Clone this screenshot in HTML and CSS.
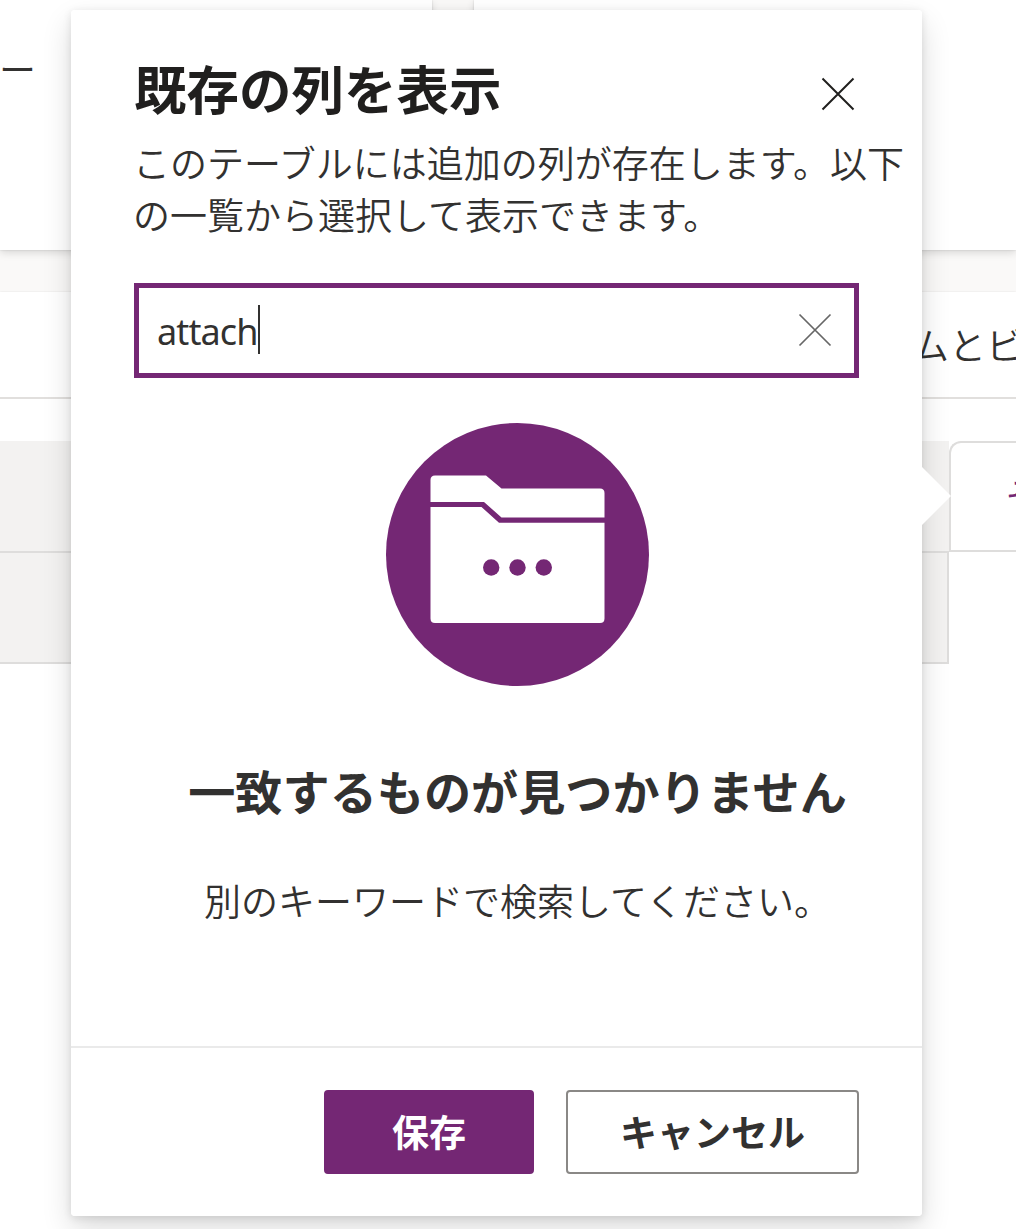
FILE: index.html
```html
<!DOCTYPE html>
<html lang="ja">
<head>
<meta charset="utf-8">
<title>既存の列を表示</title>
<link rel="stylesheet" href="styles.css">
</head>
<body>
<main class="page">
  <div class="cards">
    <section class="card card-left"><span>ー</span></section>
    <section class="card card-right"></section>
  </div>
  <section class="panel">
    <header class="panel-head"><span>ムとビ</span></header>
    <div class="table">
      <div class="rows">
        <div class="row row-head"></div>
        <div class="row row-body"></div>
      </div>
      <div class="more"><span>そ</span></div>
    </div>
  </section>
</main>
<div class="callout" role="dialog" aria-labelledby="title">
  <div class="beak"></div>
  <div class="surface">
    <div class="intro">
      <div class="title-row">
        <h1 id="title">既存の列を表示</h1>
        <button class="icon-button close" aria-label="閉じる">
          <svg width="34" height="34" viewBox="0 0 34 34"><path d="M1.5 1.5 32.5 32.5M32.5 1.5 1.5 32.5"/></svg>
        </button>
      </div>
      <p class="description">このテーブルには追加の列が存在します。以下の一覧から選択して表示できます。</p>
    </div>
    <div class="search">
      <span class="query">attach</span><span class="caret"></span>
      <button class="icon-button clear" aria-label="クリア">
        <svg width="34" height="34" viewBox="0 0 34 34"><path d="M1.5 1.5 32.5 32.5M32.5 1.5 1.5 32.5"/></svg>
      </button>
    </div>
    <div class="empty">
      <svg class="folder" width="263" height="263" viewBox="0 0 263 263">
        <circle cx="131.5" cy="131.5" r="131.5" fill="#742774"/>
        <path fill="#fff" d="M44.5 79V57q0-4.500 4.500-4.500H100L115.500 65.500H214q4.500 0 4.500 4.500V94.500H115.500L98 79Z"/>
        <path fill="#fff" d="M44.500 84H95.500L113 99.700H218.500V195.500q0 4.500-4.500 4.500H49q-4.500 0-4.500-4.500Z"/>
        <g fill="#742774"><circle cx="105.200" cy="144.500" r="8.200"/><circle cx="131.500" cy="144.500" r="8.200"/><circle cx="157.800" cy="144.500" r="8.200"/></g>
      </svg>
      <h2>一致するものが見つかりません</h2>
      <p>別のキーワードで検索してください。</p>
    </div>
    <footer class="actions">
      <button class="button primary">保存</button>
      <button class="button">キャンセル</button>
    </footer>
  </div>
</div>
</body>
</html>
```
FILE: styles.css
```css
* { box-sizing: border-box; }

body {
  margin: 0;
  width: 1016px;
  height: 1229px;
  overflow: hidden;
  position: relative;
  background: #faf9f8;
  color: #323130;
  font-family: "Noto Sans CJK JP", sans-serif;
  font-size: 37px;
  font-weight: 350;
}

h1, h2, p { margin: 0; }

.page {
  display: flex;
  flex-direction: column;
  gap: 42px;
  height: 1229px;
}

.cards { display: flex; gap: 42px; height: 250px; }

.card {
  background: #fff;
  box-shadow: 0 3px 8px rgba(0, 0, 0, .13), 0 0 2px rgba(0, 0, 0, .15);
}
.card-left { width: 432px; padding-top: 42px; line-height: 52px; }
.card-left span { margin-left: -1px; }
.card-right { flex: 1; }

.panel {
  flex: 1;
  background: #fff;
  box-shadow: 0 0 2px rgba(0, 0, 0, .1);
}

.panel-head {
  height: 107px;
  padding: 26px 0 0 912px;
  border-bottom: 2px solid #e1dfdd;
  line-height: 52px;
  white-space: nowrap;
  overflow: hidden;
}

.table { display: flex; margin-top: 42px; }
.rows { width: 949px; }
.row { background: #f3f2f1; border-bottom: 2px solid #dedddc; }
.row-head { height: 112px; }
.row-body { height: 111px; border-right: 2px solid #dedddc; }

.more {
  flex: 1;
  height: 111px;
  padding: 25px 0 0 54px;
  border: 2px solid #dedddc;
  border-right: 0;
  border-radius: 12px 0 0 0;
  color: #742774;
  font-weight: 400;
  line-height: 52px;
  white-space: nowrap;
  overflow: hidden;
}

.callout {
  position: absolute;
  left: 71px;
  top: 10px;
  width: 851px;
  height: 1206px;
  border-radius: 4px;
  box-shadow: 0 13px 30px rgba(0, 0, 0, .14), 0 2px 8px rgba(0, 0, 0, .11);
}

.beak {
  position: absolute;
  right: -29px;
  top: 456px;
  width: 60px;
  height: 60px;
  background: #fff;
  clip-path: polygon(0 0, 30px 0, 60px 30px, 30px 60px, 0 60px);
}

.surface {
  position: relative;
  display: flex;
  flex-direction: column;
  height: 100%;
  background: #fff;
  border-radius: 4px;
}

.intro { padding: 42px 0 0 62px; height: 273px; }

.title-row {
  display: flex;
  align-items: center;
  justify-content: space-between;
  height: 84px;
  padding-right: 67px;
}

h1 {
  color: #201f1e;
  font-size: 52.5px;
  font-weight: 700;
  line-height: 70px;
  margin-top: -14px;
  padding-left: 1px;
}

.description { width: 780px; line-height: 52px; }

.icon-button { display: flex; padding: 0; border: 0; background: none; }
.icon-button svg { fill: none; stroke: #201f1e; stroke-width: 2; }
.clear { margin: -2px 0 0 auto; }
.clear svg { stroke: #666; stroke-width: 1.7; }

.search {
  display: flex;
  align-items: center;
  width: 725px;
  height: 95px;
  margin-left: 63px;
  padding: 0 22px 0 18px;
  border: 5px solid #742774;
}
.query { padding-top: 2px; font-family: "Noto Sans", sans-serif; font-weight: 400; font-size: 36px; letter-spacing: -.9px; }
.caret { width: 2px; height: 49px; margin-top: -2px; background: #323130; }

.empty {
  display: flex;
  flex-direction: column;
  align-items: center;
  flex: 1;
  padding: 45px 0 0 42px;
}
.folder { display: block; }
h2 { margin-top: 69px; font-size: 47.15px; font-weight: 700; line-height: 70px; }
.empty p { margin-top: 49px; line-height: 52px; }

.actions {
  display: flex;
  justify-content: flex-end;
  gap: 32px;
  height: 170px;
  padding: 42px 63px 0 0;
  border-top: 2px solid #eaeaea;
}

.button {
  width: 293px;
  height: 84px;
  padding: 0 0 2px;
  border: 2px solid #8a8886;
  border-radius: 4px;
  background: #fff;
  color: #323130;
  font: 700 37px/78px "Noto Sans CJK JP", sans-serif;
}
.primary { width: 210px; border-color: #742774; background: #742774; color: #fff; }
```
